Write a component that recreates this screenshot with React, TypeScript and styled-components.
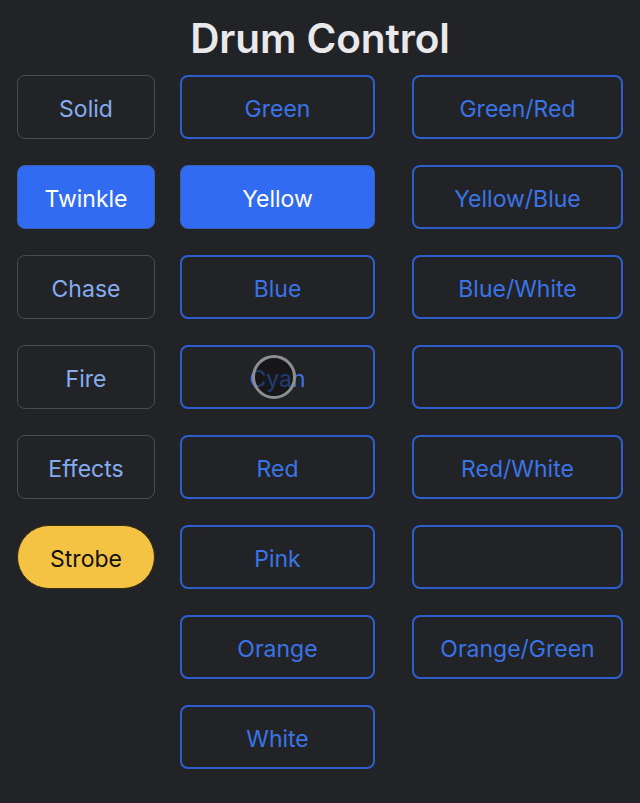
import React from "react";
import styled, { createGlobalStyle, css } from "styled-components";

const Global = createGlobalStyle`
  html, body { margin: 0; padding: 0; background: #222327; }
  body { font-family: Inter, "Noto Sans", "Liberation Sans", sans-serif; }
  * { box-sizing: border-box; }
`;

const Page = styled.div`
  width: 640px;
  height: 803px;
  background: #222327;
  display: flex;
  flex-direction: column;
  align-items: center;
  overflow: hidden;
`;

const Title = styled.h1`
  margin: 14px 0 0;
  height: 61px;
  font-size: 40.5px;
  font-weight: 600;
  line-height: 49px;
  color: #e9e9eb;
  letter-spacing: -0.1px;
`;

const Columns = styled.div`
  display: flex;
  align-items: flex-start;
  width: 100%;
  padding: 0 17px;
`;

const Column = styled.div<{ $width: number; $offset?: number }>`
  display: flex;
  flex-direction: column;
  gap: 26px;
  flex: 0 0 ${(p) => p.$width}px;
  margin-left: ${(p) => p.$offset ?? 0}px;
`;

type Variant = "mode" | "color" | "active" | "strobe";

const Button = styled.button<{ $variant: Variant }>`
  position: relative;
  height: 64px;
  width: 100%;
  border-radius: 8px;
  font-family: Inter, "Noto Sans", "Liberation Sans", sans-serif;
  font-size: 23px;
  font-weight: 400;
  background: transparent;
  cursor: pointer;
  padding: 4px 0 0;
  ${(p) =>
    p.$variant === "mode" &&
    css`
      border: 1.5px solid #4a4b50;
      color: #86acef;
    `}
  ${(p) =>
    p.$variant === "color" &&
    css`
      border: 2px solid #2d5fcc;
      color: #3a74e6;
    `}
  ${(p) =>
    p.$variant === "active" &&
    css`
      border: 1.5px solid #3a5fae;
      background: #316bf2;
      color: #ffffff;
    `}
  ${(p) =>
    p.$variant === "strobe" &&
    css`
      border: 1px solid #3a2f12;
      background: #f4c343;
      color: #111111;
      border-radius: 32px;
    `}
`;

const Touch = styled.span`
  position: absolute;
  left: 70px;
  top: 8px;
  width: 44px;
  height: 44px;
  border-radius: 50%;
  border: 3px solid #8e8e90;
  background: rgba(14, 14, 16, 0.55);
  pointer-events: none;
`;

const modes = [
  { label: "Solid", v: "mode" as Variant },
  { label: "Twinkle", v: "active" as Variant },
  { label: "Chase", v: "mode" as Variant },
  { label: "Fire", v: "mode" as Variant },
  { label: "Effects", v: "mode" as Variant },
  { label: "Strobe", v: "strobe" as Variant },
];

const colors = ["Green", "Yellow", "Blue", "Cyan", "Red", "Pink", "Orange", "White"];
const combos = ["Green/Red", "Yellow/Blue", "Blue/White", "", "Red/White", "", "Orange/Green"];

export default function App() {
  return (
    <Page>
      <Global />
      <Title>Drum Control</Title>
      <Columns>
        <Column $width={138}>
          {modes.map((m) => (
            <Button key={m.label} $variant={m.v}>
              {m.label}
            </Button>
          ))}
        </Column>
        <Column $width={195} $offset={25}>
          {colors.map((c) => (
            <Button key={c} $variant={c === "Yellow" ? "active" : "color"}>
              {c}
              {c === "Cyan" && <Touch />}
            </Button>
          ))}
        </Column>
        <Column $width={211} $offset={37}>
          {combos.map((c, i) => (
            <Button key={i} $variant="color">
              {c}
            </Button>
          ))}
        </Column>
      </Columns>
    </Page>
  );
}
